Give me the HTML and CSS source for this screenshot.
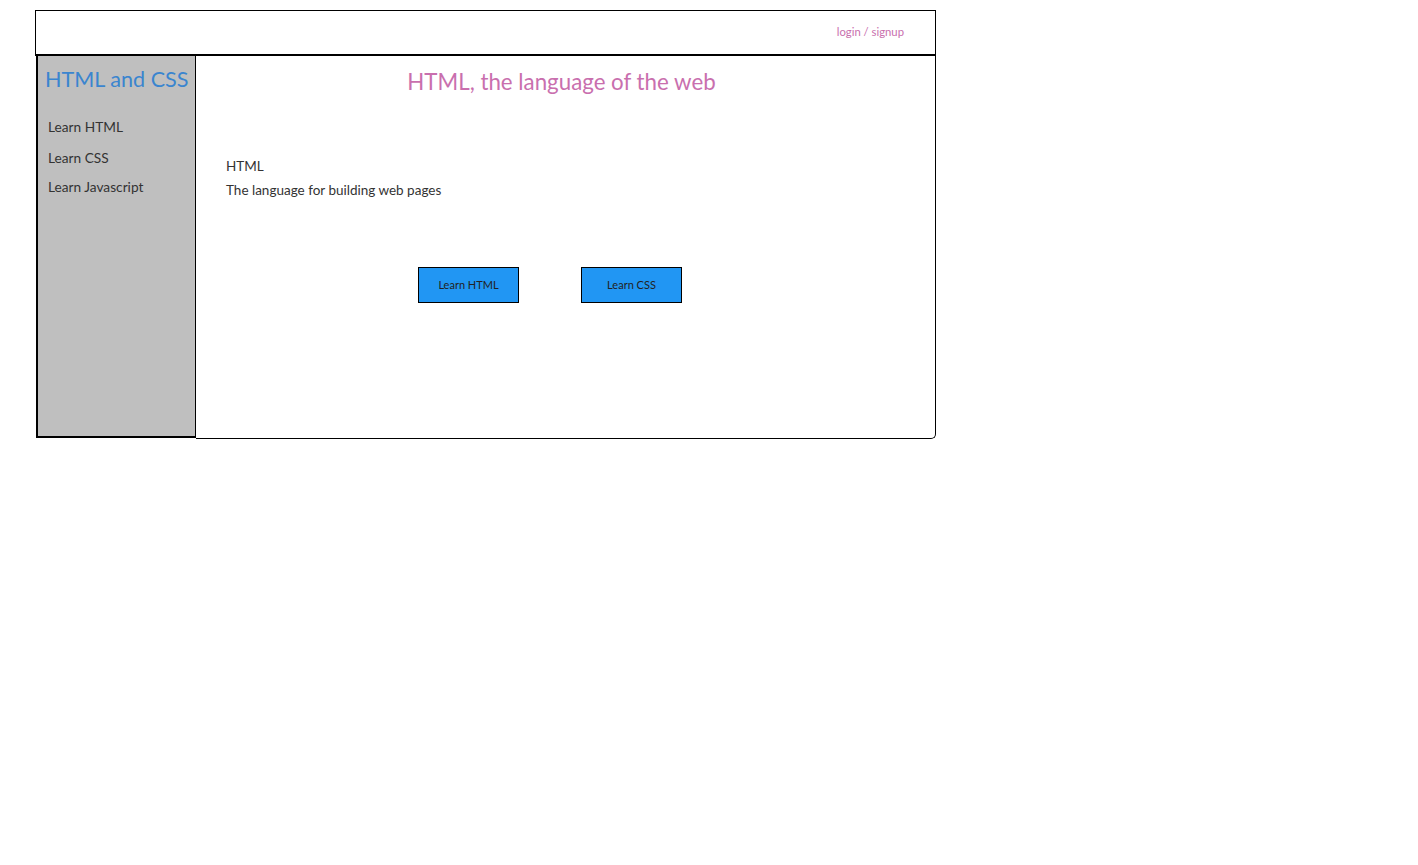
FILE: index.html
```html
<!DOCTYPE html>
<html>
<head>
<meta charset="utf-8">
<link rel="stylesheet" href="styles.css">
</head>
<body>
<div class="frame">
  <header class="header">
    <a class="login">login / signup</a>
  </header>
  <div class="body">
    <aside class="sidebar">
      <h1 class="brand">HTML and CSS</h1>
      <nav class="nav">
        <a class="nav-item">Learn HTML</a>
        <a class="nav-item">Learn CSS</a>
        <a class="nav-item">Learn Javascript</a>
      </nav>
    </aside>
    <main class="main">
      <h2 class="title">HTML, the language of the web</h2>
      <div class="intro">
        <p class="intro-line">HTML</p>
        <p class="intro-line">The language for building web pages</p>
      </div>
      <div class="actions">
        <button class="btn">Learn HTML</button>
        <button class="btn">Learn CSS</button>
      </div>
    </main>
  </div>
</div>
</body>
</html>
```
FILE: styles.css
```css
* { box-sizing: border-box; }
body {
  margin: 0;
  background: #fff;
  font-family: "Lato", "Open Sans", sans-serif;
  color: #333;
}
.frame {
  margin: 10px 0 0 35px;
  width: 901px;
}
.header {
  height: 46px;
  border: 1px solid #000;
  border-bottom: 2px solid #000;
  display: flex;
  justify-content: flex-end;
  align-items: center;
  padding-right: 31px;
}
.login {
  font-size: 11.3px;
  color: #c96fae;
  margin-top: -2px;
}
.body {
  display: flex;
  height: 383px;
}
.sidebar {
  width: 160px;
  margin-left: 1px;
  background: #bfbfbf;
  border: 1px solid #000;
  border-left-width: 2px;
  border-bottom-width: 2px;
  border-top: none;
  height: 382px;
  padding: 10px 0 0 7px;
}
.brand {
  margin: 0;
  font-weight: 400;
  font-size: 21.6px;
  color: #3a85cf;
  line-height: 26px;
  white-space: nowrap;
}
.nav {
  display: flex;
  flex-direction: column;
  margin-top: 27px;
  padding-left: 3px;
}
.nav-item {
  font-size: 13.7px;
  line-height: 16px;
  color: #333;
  margin-bottom: 15px;
}
.nav-item:nth-child(2) { margin-bottom: 13px; }
.main {
  flex: 1;
  border-right: 1px solid #000;
  border-bottom: 1px solid #000;
  border-bottom-right-radius: 5px;
  padding: 12px 0 0 30px;
}
.title {
  margin: 0;
  font-weight: 400;
  font-size: 22.3px;
  line-height: 28px;
  color: #c96fae;
  text-align: center;
  padding-right: 38px;
}
.intro {
  margin-top: 62px;
}
.intro-line {
  margin: 0 0 8px 0;
  font-size: 13.5px;
  line-height: 16px;
  color: #333;
}
.actions {
  display: flex;
  gap: 62px;
  margin-top: 69px;
  padding-left: 192px;
}
.btn {
  width: 101px;
  height: 36px;
  background: #2196f3;
  border: 1px solid #000;
  border-radius: 0;
  font-family: inherit;
  font-size: 11px;
  color: #222;
  padding: 0 0 2px 0;
}
```
